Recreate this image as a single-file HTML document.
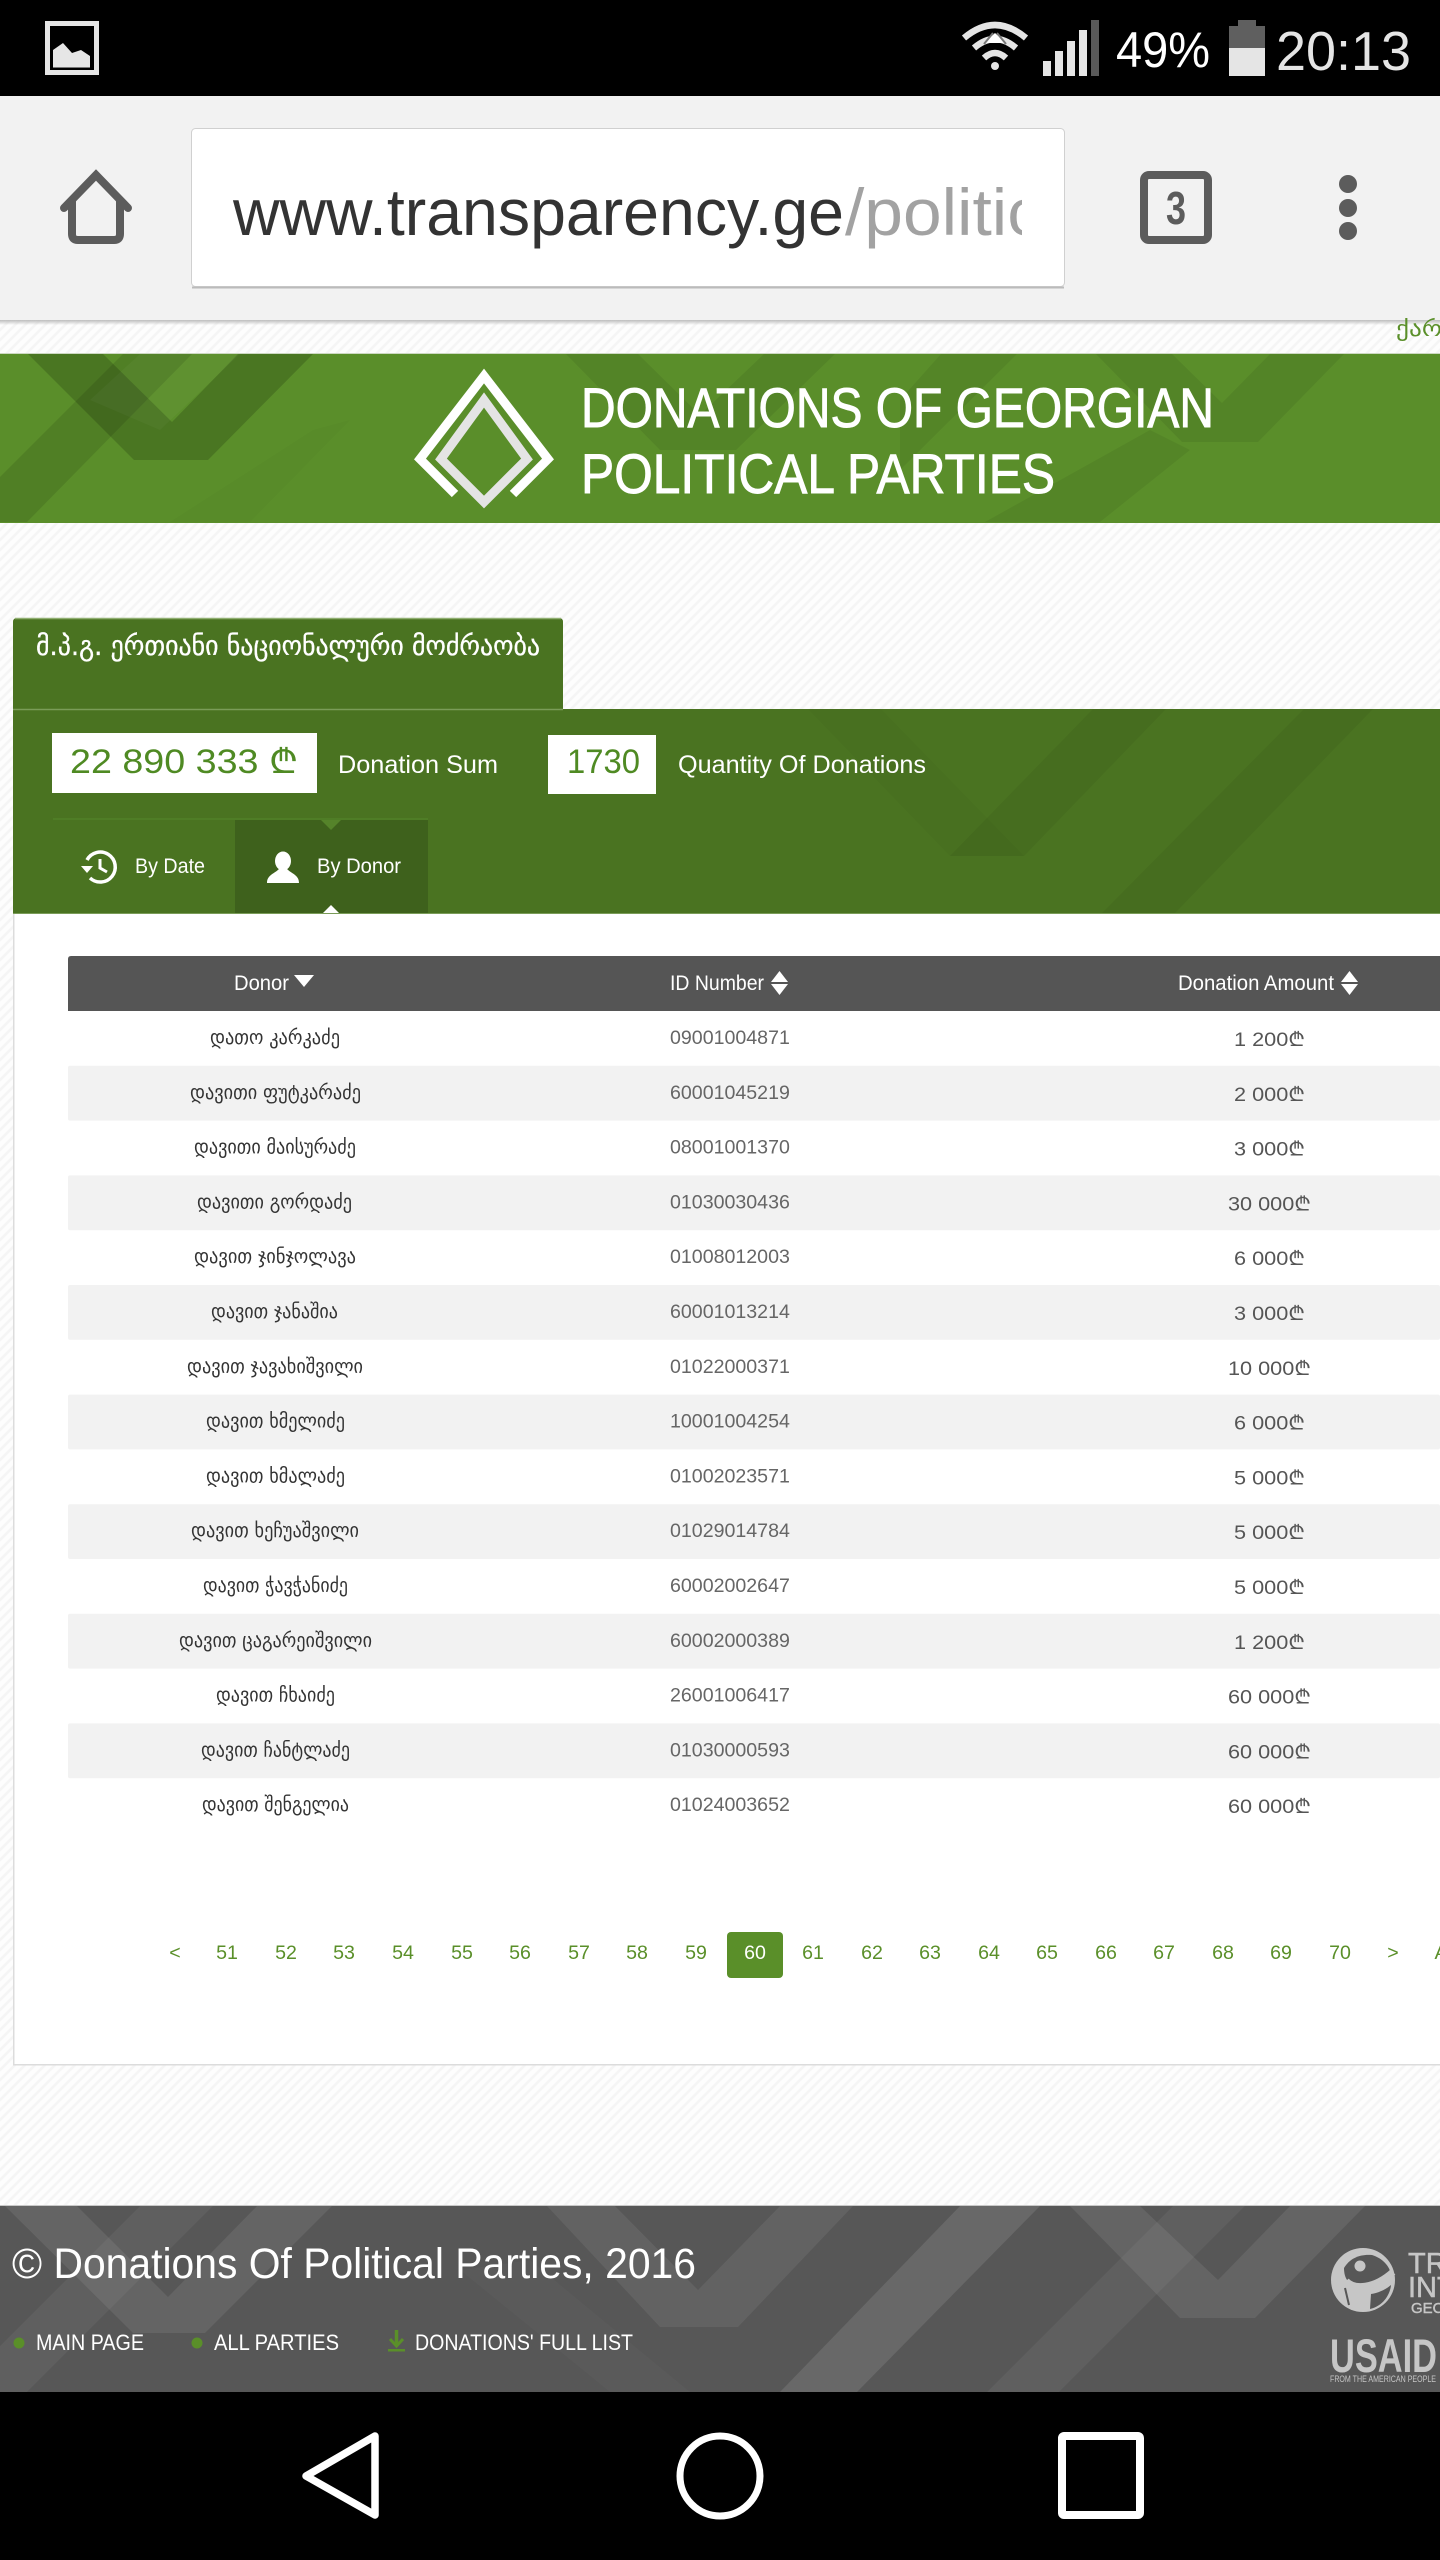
<!DOCTYPE html>
<html><head><meta charset="utf-8"><title>Donations of Georgian Political Parties</title>
<style>
html,body{margin:0;padding:0;background:#fff;width:1440px;height:2560px;overflow:hidden}
svg{display:block}
text{font-family:"Liberation Sans","DejaVu Sans",sans-serif}
.ka{font-family:"DejaVu Sans","Liberation Sans",sans-serif}
.n{font-size:20px;fill:#333;transform:translateY(2px)}
.i{font-size:19.6px;fill:#666;transform:translate(1px,1px)}
.a{font-size:19.6px;fill:#555;transform:translateY(1px)}
.p{font-size:19.6px;fill:#5a8f29;text-anchor:middle}
.h{font-size:21px;fill:#fff}
.f{font-size:22px;fill:#fff}
</style></head><body>
<svg xmlns="http://www.w3.org/2000/svg" width="1440" height="2560" viewBox="0 0 1440 2560">
<defs>
<pattern id="hatch" width="10" height="10" patternUnits="userSpaceOnUse"><rect width="10" height="10" fill="#fdfdfd"/><path d="M-2 12L12 -2M-2 2L2 -2M8 12L12 8" stroke="#f5f5f5" stroke-width="2.5"/></pattern>
<linearGradient id="sh" x1="0" y1="0" x2="0" y2="1"><stop offset="0" stop-color="#bdbdbd"/><stop offset="1" stop-color="#bdbdbd" stop-opacity="0"/></linearGradient>
<clipPath id="urlclip"><rect x="200" y="130" width="822" height="150"/></clipPath>
</defs>
<rect width="1440" height="2560" fill="url(#hatch)"/>

<!-- status bar -->
<rect width="1440" height="96" fill="#000"/>
<rect x="47.5" y="23.5" width="49" height="49" fill="none" stroke="#e6e6e6" stroke-width="5"/>
<path d="M53 67V50L63 43L72 53L81 50L90 56V67Z" fill="#e6e6e6"/>
<path d="M53 67.5H90" stroke="#777" stroke-width="1"/>
<g fill="none" stroke="#e5e5e5" stroke-width="6.5">
<path d="M964 38Q995 12 1026 38"/><path d="M974 48Q995 30 1016 48"/><path d="M984 58Q995 48 1006 58"/>
</g>
<path d="M995 33L1006 43H984Z" fill="#fff"/>
<path d="M984 44L993 33M1006 44L997 33" stroke="#777" stroke-width="2"/>
<circle cx="995" cy="66" r="4" fill="#e5e5e5"/>
<g fill="#e5e5e5"><rect x="1043" y="61" width="8" height="15"/><rect x="1055" y="51" width="8" height="25"/><rect x="1067" y="41" width="8" height="35"/><rect x="1079" y="30" width="8" height="46"/></g>
<rect x="1091" y="20" width="8" height="56" fill="#5a5a5a"/>
<text x="1116" y="67" font-size="50" fill="#fff" textLength="94" lengthAdjust="spacingAndGlyphs">49%</text>
<path d="M1238 20H1256V26H1265V48H1229V26H1238Z" fill="#5f5f5f"/>
<rect x="1229" y="48" width="36" height="28" fill="#e5e5e5"/>
<text x="1276" y="70" font-size="55" fill="#e5e5e5" textLength="135" lengthAdjust="spacingAndGlyphs">20:13</text>

<!-- toolbar -->
<rect y="96" width="1440" height="224" fill="#f2f2f2"/>
<rect y="320" width="1440" height="5" fill="url(#sh)"/>
<path d="M64 208L96 175L128 208" fill="none" stroke="#5c5c5c" stroke-width="8" stroke-linecap="round" stroke-linejoin="miter"/>
<path d="M72 200V234Q72 240 78 240H114Q120 240 120 234V200" fill="none" stroke="#5c5c5c" stroke-width="8"/>
<rect x="191.500" y="128.500" width="873" height="158" rx="4" fill="#fff" stroke="#d0d0d0" stroke-width="1"/>
<path d="M192 287.500H1064" stroke="#bbb" stroke-width="2"/>
<text x="233" y="235" font-size="66" fill="#333" textLength="611" lengthAdjust="spacingAndGlyphs">www.transparency.ge</text>
<g clip-path="url(#urlclip)"><text x="845" y="235" font-size="66" fill="#a2a2a2" textLength="197" lengthAdjust="spacingAndGlyphs">/politic</text></g>
<rect x="1144" y="175" width="64" height="65" rx="5" fill="none" stroke="#5c5c5c" stroke-width="8"/>
<text x="1166" y="224" font-size="46" font-weight="bold" fill="#5c5c5c" textLength="20" lengthAdjust="spacingAndGlyphs">3</text>
<circle cx="1348" cy="184" r="9" fill="#5c5c5c"/><circle cx="1348" cy="208" r="9" fill="#5c5c5c"/><circle cx="1348" cy="231" r="9" fill="#5c5c5c"/>

<text class="ka" x="1396" y="336" font-size="22" fill="#5a8f29" textLength="46" lengthAdjust="spacingAndGlyphs">ქარ</text>

<!-- green header -->
<rect y="353" width="1440" height="1" fill="#cdd8c2"/>
<rect y="354" width="1440" height="169" fill="#5a8e2a"/>
<g fill="#000">
<polygon fill-opacity=".1" points="123,354 192,354 27,522 0,522 0,477"/>
<polygon fill-opacity=".17" points="28,354 103,354 172,422 238,354 313,354 208,460 134,460"/>
<polygon fill-opacity=".07" points="566,354 638,354 700,415 764,354 835,354 736,450 660,450"/>
<polygon fill-opacity=".07" points="1096,354 1172,354 1222,403 1270,354 1344,354 1258,442 1182,442"/>
<polygon fill-opacity=".06" points="941,354 1017,354 900,470 900,400"/>
<polygon fill-opacity=".06" points="1150,430 1190,450 1100,522 985,522"/>
<polygon fill-opacity=".02" points="313,430 350,420 250,522 170,522"/>
</g>
<polygon fill="#fff" fill-opacity=".03" points="140,354 240,354 160,430 90,400"/>
<polyline points="455,494 420,459 484,376 548,459 513,494" fill="none" stroke="#fff" stroke-width="9" stroke-linejoin="miter"/>
<polygon points="484,400 441,459 484,502 527,459" fill="none" stroke="#e4e4e4" stroke-width="9"/>
<text x="581" y="427" font-size="56" fill="#fff" stroke="#fff" stroke-width=".9" textLength="633" lengthAdjust="spacingAndGlyphs">DONATIONS OF GEORGIAN</text>
<text x="581" y="493" font-size="56" fill="#fff" stroke="#fff" stroke-width=".9" textLength="474" lengthAdjust="spacingAndGlyphs">POLITICAL PARTIES</text>

<!-- tab + panel -->
<path d="M13 709V622Q13 618 17 618H559Q563 618 563 622V709Z" fill="#4a7321"/>
<path d="M15 618.500H561" stroke="#8fae70" stroke-width="1.500"/>
<text class="ka" x="36" y="655" font-size="27" fill="#fff" stroke="#fff" stroke-width=".3" textLength="504" lengthAdjust="spacingAndGlyphs">მ.პ.გ. ერთიანი ნაციონალური მოძრაობა</text>
<rect x="13" y="709" width="1427" height="204" fill="#4a7321"/>
<path d="M13 709.500H563" stroke="#7a9c58" stroke-width="1.500"/>
<g fill="#000">
<polygon fill-opacity=".02" points="808,709 881,709 1024,856 950,856"/>
<polygon fill-opacity=".05" points="1093,709 1166,709 1024,856 950,856"/>
<polygon fill-opacity=".05" points="1304,709 1373,709 1175,913 1102,913"/>
</g>
<rect x="52" y="733" width="265" height="60" fill="#fff"/>
<text x="70" y="773" font-size="34" fill="#4f8a23" textLength="228" lengthAdjust="spacingAndGlyphs">22 890 333 ₾</text>
<rect x="548" y="735" width="108" height="59" fill="#fff"/>
<text x="567" y="773" font-size="34" fill="#4f8a23" textLength="73" lengthAdjust="spacingAndGlyphs">1730</text>
<text x="338" y="773" font-size="25" fill="#fff" textLength="160" lengthAdjust="spacingAndGlyphs">Donation Sum</text>
<text x="678" y="773" font-size="25" fill="#fff" textLength="248" lengthAdjust="spacingAndGlyphs">Quantity Of Donations</text>
<rect x="53" y="818" width="375" height="2" fill="#4f7d26"/>
<rect x="235" y="820" width="193" height="93" fill="#3e611c"/>
<polygon points="321,820 341,820 331,830" fill="#55832a"/>
<polygon points="323,913 339,913 331,905" fill="#fff"/>
<path d="M87 860A15 15 0 1 1 90 878" fill="none" stroke="#fff" stroke-width="3.500"/>
<polygon points="81,866 93,866 87,873" fill="#fff"/>
<path d="M100 859V868L107 872" fill="none" stroke="#fff" stroke-width="3"/>
<text x="135" y="873" font-size="21" fill="#fff" textLength="70" lengthAdjust="spacingAndGlyphs">By Date</text>
<ellipse cx="283" cy="861" rx="8" ry="9.500" fill="#fff"/>
<path d="M267 883C267 875 274 874 279 869H287C292 874 299 875 299 883Z" fill="#fff"/>
<text x="317" y="873" font-size="21" fill="#fff" textLength="84" lengthAdjust="spacingAndGlyphs">By Donor</text>

<!-- white panel -->
<rect x="13" y="913" width="1427" height="1151" fill="#fff"/>
<rect x="13" y="913" width="1427" height="1" fill="#7a9c58"/>
<rect x="13" y="914" width="1.500" height="1151" fill="#dcdcdc"/>
<rect x="13" y="2064" width="1427" height="1.500" fill="#dcdcdc"/>

<!-- table -->
<path d="M68 1011V959Q68 956 71 956H1440V1011Z" fill="#555"/>
<text class="h" x="234" y="990" textLength="55" lengthAdjust="spacingAndGlyphs">Donor</text>
<polygon points="294,975 314,975 304,987" fill="#fff"/>
<text class="h" x="670" y="990" textLength="94" lengthAdjust="spacingAndGlyphs">ID Number</text>
<polygon points="771,982 788,982 779.500,971" fill="#fff"/><polygon points="771,984 788,984 779.500,995" fill="#fff"/>
<text class="h" x="1178" y="990" textLength="156" lengthAdjust="spacingAndGlyphs">Donation Amount</text>
<polygon points="1341,982 1358,982 1349.500,971" fill="#fff"/><polygon points="1341,984 1358,984 1349.500,995" fill="#fff"/>

<g fill="#f2f2f2">
<rect x="68" y="1065.800" width="1372" height="54.800" rx="2"/>
<rect x="68" y="1175.400" width="1372" height="54.800" rx="2"/>
<rect x="68" y="1285" width="1372" height="54.800" rx="2"/>
<rect x="68" y="1394.600" width="1372" height="54.800" rx="2"/>
<rect x="68" y="1504.200" width="1372" height="54.800" rx="2"/>
<rect x="68" y="1613.800" width="1372" height="54.800" rx="2"/>
<rect x="68" y="1723.400" width="1372" height="54.800" rx="2"/>
</g>

<text class="n ka" x="210" y="1042" textLength="130" lengthAdjust="spacingAndGlyphs">დათო კარკაძე</text>
<text class="i" x="669" y="1043">09001004871</text>
<text class="a" x="1234" y="1045" textLength="71" lengthAdjust="spacingAndGlyphs">1 200₾</text>

<text class="n ka" x="190" y="1096.800" textLength="171" lengthAdjust="spacingAndGlyphs">დავითი ფუტკარაძე</text>
<text class="i" x="669" y="1097.800">60001045219</text>
<text class="a" x="1234" y="1099.800" textLength="71" lengthAdjust="spacingAndGlyphs">2 000₾</text>

<text class="n ka" x="194" y="1151.600" textLength="162" lengthAdjust="spacingAndGlyphs">დავითი მაისურაძე</text>
<text class="i" x="669" y="1152.600">08001001370</text>
<text class="a" x="1234" y="1154.600" textLength="71" lengthAdjust="spacingAndGlyphs">3 000₾</text>

<text class="n ka" x="197" y="1206.400" textLength="155" lengthAdjust="spacingAndGlyphs">დავითი გორდაძე</text>
<text class="i" x="669" y="1207.400">01030030436</text>
<text class="a" x="1228" y="1209.400" textLength="83" lengthAdjust="spacingAndGlyphs">30 000₾</text>

<text class="n ka" x="194" y="1261.200" textLength="162" lengthAdjust="spacingAndGlyphs">დავით ჯინჯოლავა</text>
<text class="i" x="669" y="1262.200">01008012003</text>
<text class="a" x="1234" y="1264.200" textLength="71" lengthAdjust="spacingAndGlyphs">6 000₾</text>

<text class="n ka" x="211" y="1316" textLength="127" lengthAdjust="spacingAndGlyphs">დავით ჯანაშია</text>
<text class="i" x="669" y="1317">60001013214</text>
<text class="a" x="1234" y="1319" textLength="71" lengthAdjust="spacingAndGlyphs">3 000₾</text>

<text class="n ka" x="187" y="1370.800" textLength="176" lengthAdjust="spacingAndGlyphs">დავით ჯავახიშვილი</text>
<text class="i" x="669" y="1371.800">01022000371</text>
<text class="a" x="1228" y="1373.800" textLength="83" lengthAdjust="spacingAndGlyphs">10 000₾</text>

<text class="n ka" x="206" y="1425.600" textLength="139" lengthAdjust="spacingAndGlyphs">დავით ხმელიძე</text>
<text class="i" x="669" y="1426.600">10001004254</text>
<text class="a" x="1234" y="1428.600" textLength="71" lengthAdjust="spacingAndGlyphs">6 000₾</text>

<text class="n ka" x="206" y="1480.400" textLength="139" lengthAdjust="spacingAndGlyphs">დავით ხმალაძე</text>
<text class="i" x="669" y="1481.400">01002023571</text>
<text class="a" x="1234" y="1483.400" textLength="71" lengthAdjust="spacingAndGlyphs">5 000₾</text>

<text class="n ka" x="191" y="1535.200" textLength="168" lengthAdjust="spacingAndGlyphs">დავით ხეჩუაშვილი</text>
<text class="i" x="669" y="1536.200">01029014784</text>
<text class="a" x="1234" y="1538.200" textLength="71" lengthAdjust="spacingAndGlyphs">5 000₾</text>

<text class="n ka" x="203" y="1590" textLength="145" lengthAdjust="spacingAndGlyphs">დავით ჭავჭანიძე</text>
<text class="i" x="669" y="1591">60002002647</text>
<text class="a" x="1234" y="1593" textLength="71" lengthAdjust="spacingAndGlyphs">5 000₾</text>

<text class="n ka" x="179" y="1644.800" textLength="193" lengthAdjust="spacingAndGlyphs">დავით ცაგარეიშვილი</text>
<text class="i" x="669" y="1645.800">60002000389</text>
<text class="a" x="1234" y="1647.800" textLength="71" lengthAdjust="spacingAndGlyphs">1 200₾</text>

<text class="n ka" x="216" y="1699.600" textLength="119" lengthAdjust="spacingAndGlyphs">დავით ჩხაიძე</text>
<text class="i" x="669" y="1700.600">26001006417</text>
<text class="a" x="1228" y="1702.600" textLength="83" lengthAdjust="spacingAndGlyphs">60 000₾</text>

<text class="n ka" x="201" y="1754.400" textLength="149" lengthAdjust="spacingAndGlyphs">დავით ჩანტლაძე</text>
<text class="i" x="669" y="1755.400">01030000593</text>
<text class="a" x="1228" y="1757.400" textLength="83" lengthAdjust="spacingAndGlyphs">60 000₾</text>

<text class="n ka" x="202" y="1809.200" textLength="147" lengthAdjust="spacingAndGlyphs">დავით შენგელია</text>
<text class="i" x="669" y="1810.200">01024003652</text>
<text class="a" x="1228" y="1812.200" textLength="83" lengthAdjust="spacingAndGlyphs">60 000₾</text>

<!-- pagination -->
<rect x="727" y="1932" width="56" height="46" rx="4" fill="#5a8f29"/>
<text class="p" x="175" y="1959">&lt;</text>
<text class="p" x="227" y="1959">51</text>
<text class="p" x="286" y="1959">52</text>
<text class="p" x="344" y="1959">53</text>
<text class="p" x="403" y="1959">54</text>
<text class="p" x="462" y="1959">55</text>
<text class="p" x="520" y="1959">56</text>
<text class="p" x="579" y="1959">57</text>
<text class="p" x="637" y="1959">58</text>
<text class="p" x="696" y="1959">59</text>
<text class="p" x="755" y="1959" style="fill:#fff">60</text>
<text class="p" x="813" y="1959">61</text>
<text class="p" x="872" y="1959">62</text>
<text class="p" x="930" y="1959">63</text>
<text class="p" x="989" y="1959">64</text>
<text class="p" x="1047" y="1959">65</text>
<text class="p" x="1106" y="1959">66</text>
<text class="p" x="1164" y="1959">67</text>
<text class="p" x="1223" y="1959">68</text>
<text class="p" x="1281" y="1959">69</text>
<text class="p" x="1340" y="1959">70</text>
<text class="p" x="1393" y="1959">&gt;</text>
<text class="p" x="1441" y="1959">A</text>

<!-- footer -->
<rect y="2205" width="1440" height="1" fill="#c8c8c8"/>
<rect y="2206" width="1440" height="186" fill="#575757"/>
<g fill="#fff">
<polygon fill-opacity=".05" points="140,2206 213,2206 27,2392 0,2392 0,2346"/>
<polygon fill-opacity=".08" points="5,2206 77,2206 168,2297 257,2206 332,2206 205,2333 133,2333"/>
<polygon fill-opacity=".07" points="547,2206 615,2206 698,2290 780,2206 853,2206 738,2327 660,2327"/>
<polygon fill-opacity=".1" points="960,2206 1040,2206 857,2392 780,2392"/>
<polygon fill-opacity=".05" points="1173,2206 1245,2206 1059,2392 987,2392"/>
<polygon fill-opacity=".08" points="1070,2206 1140,2206 1218,2280 1290,2206 1365,2206 1255,2318 1180,2318"/>
<polygon fill-opacity=".02" points="460,2270 530,2260 690,2392 610,2392"/>
</g>
<text x="12" y="2278" font-size="42.500" fill="#fff" textLength="684" lengthAdjust="spacingAndGlyphs">© Donations Of Political Parties, 2016</text>
<circle cx="19" cy="2343" r="5.500" fill="#5a8f29"/>
<text class="f" x="36" y="2350" textLength="108" lengthAdjust="spacingAndGlyphs">MAIN PAGE</text>
<circle cx="197" cy="2343" r="5.500" fill="#5a8f29"/>
<text class="f" x="214" y="2350" textLength="125" lengthAdjust="spacingAndGlyphs">ALL PARTIES</text>
<path d="M396.500 2330V2345" stroke="#5a8f29" stroke-width="3.500"/>
<path d="M390 2339L396.500 2346L403 2339" fill="none" stroke="#5a8f29" stroke-width="3"/>
<rect x="388" y="2349" width="17" height="2.500" fill="#5a8f29"/>
<text class="f" x="415" y="2350" textLength="218" lengthAdjust="spacingAndGlyphs">DONATIONS' FULL LIST</text>

<!-- TI logo -->
<circle cx="1363" cy="2280" r="32" fill="#c6c6c6"/>
<path d="M1372 2255C1382 2258 1390 2266 1391 2275C1382 2284 1372 2287 1361 2287C1349 2286 1344 2279 1344 2268C1350 2258 1360 2254 1372 2255Z" fill="#575757"/>
<circle cx="1360" cy="2266" r="5.500" fill="#c6c6c6"/>
<path d="M1346 2281C1354 2290 1374 2289 1393 2272" fill="none" stroke="#c6c6c6" stroke-width="7"/>
<path d="M1370 2309C1383 2306 1390 2295 1391 2285C1385 2290 1378 2293 1371 2294Z" fill="#575757"/>
<path d="M1345 2288L1349 2305" stroke="#575757" stroke-width="2"/>
<text x="1408" y="2273" font-size="29" fill="#c6c6c6" stroke="#c6c6c6" stroke-width=".5">TR</text>
<text x="1408" y="2297" font-size="29" fill="#c6c6c6" stroke="#c6c6c6" stroke-width=".5">INT</text>
<text x="1411" y="2313" font-size="15" fill="#c6c6c6" stroke="#c6c6c6" stroke-width=".4">GEO</text>
<text x="1330" y="2372" font-size="47" font-weight="bold" fill="#c6c6c6" textLength="107" lengthAdjust="spacingAndGlyphs">USAID</text>
<text x="1330" y="2382" font-size="9" fill="#c6c6c6" textLength="106" lengthAdjust="spacingAndGlyphs">FROM THE AMERICAN PEOPLE</text>

<!-- nav bar -->
<rect y="2392" width="1440" height="168" fill="#000"/>
<polygon points="375,2436 306,2476 375,2515" fill="none" stroke="#fff" stroke-width="7.500" stroke-linejoin="round"/>
<circle cx="720" cy="2476" r="40" fill="none" stroke="#fff" stroke-width="7"/>
<rect x="1062" y="2436" width="78" height="79" rx="2" fill="none" stroke="#fff" stroke-width="8"/>
</svg>
</body></html>
